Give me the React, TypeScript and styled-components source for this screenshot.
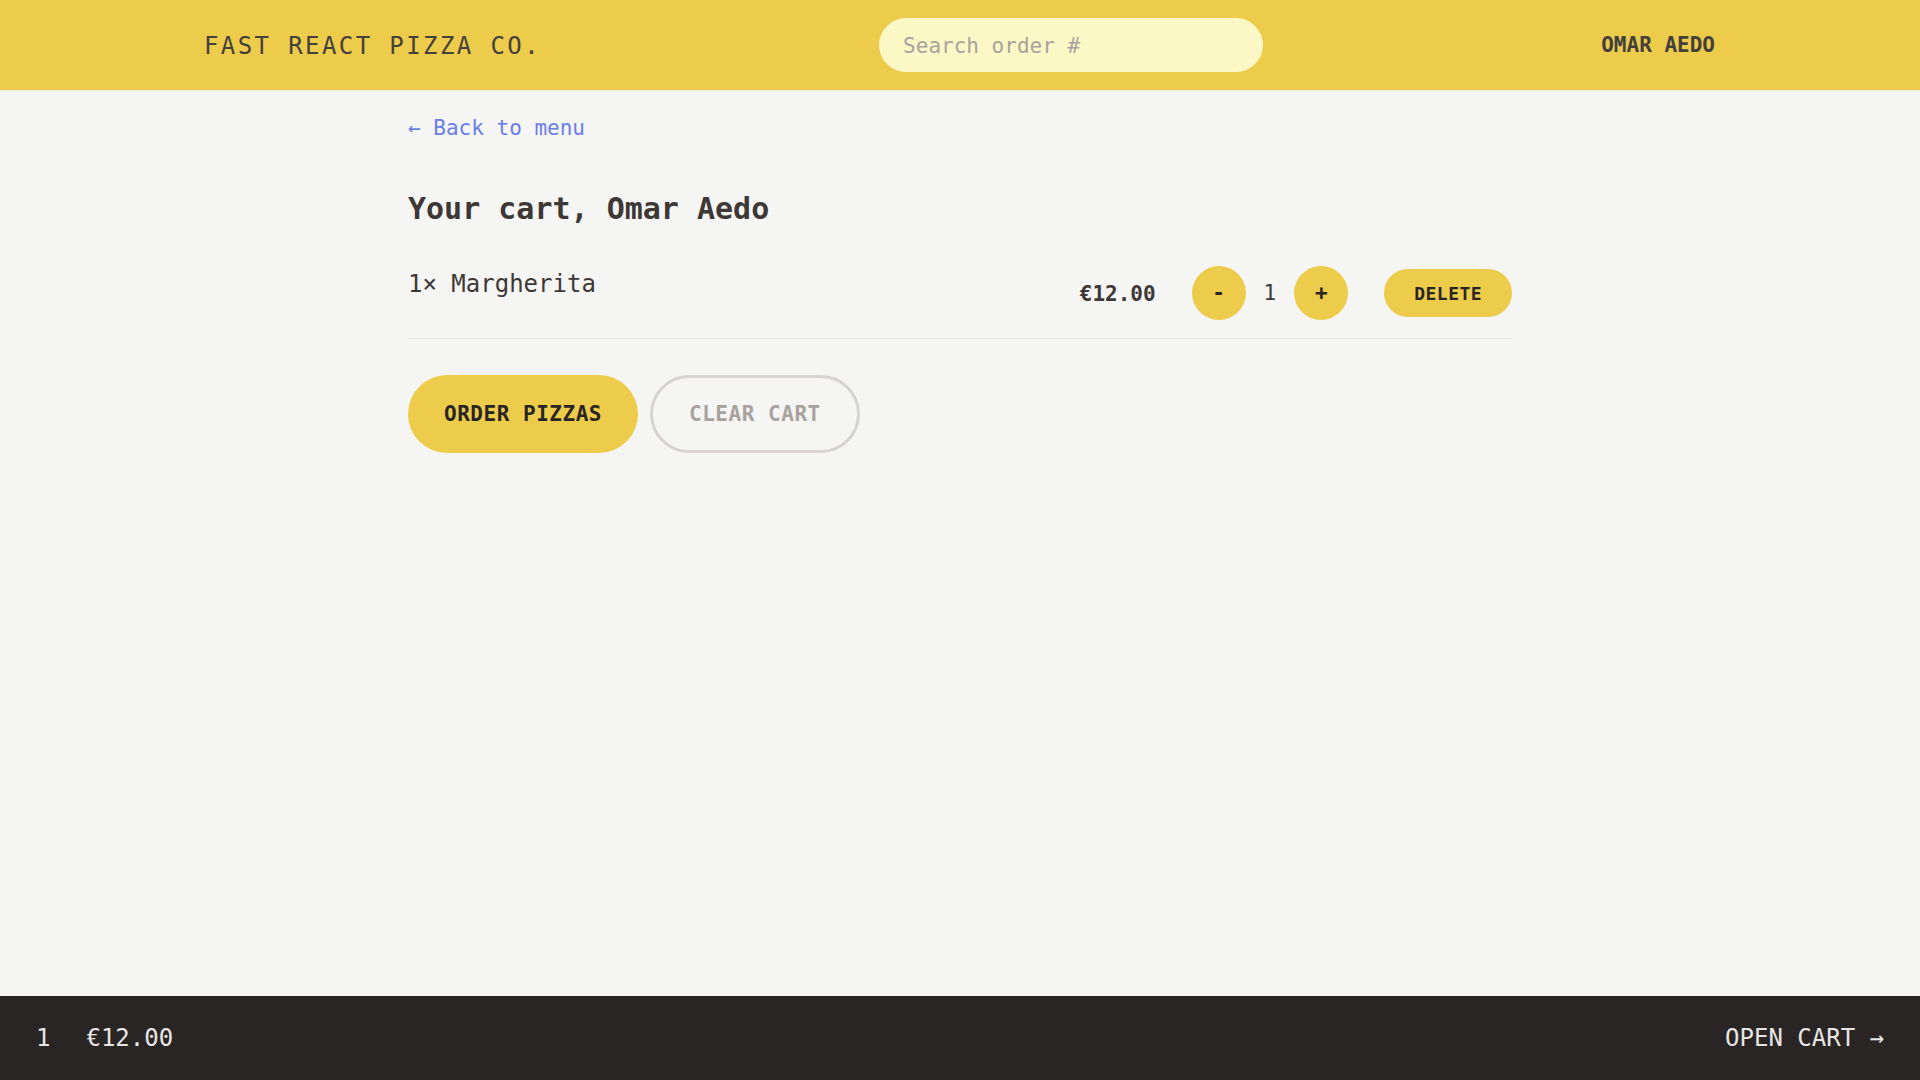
import React from "react";
import styled, { createGlobalStyle } from "styled-components";

const FONT = `"DejaVu Sans Mono", "Liberation Mono", monospace`;

const GlobalStyle = createGlobalStyle`
  *, *::before, *::after { box-sizing: border-box; }
  html, body { margin: 0; padding: 0; }
  body {
    background: #f5f5f4;
    color: #44403c;
    font-family: ${FONT};
    font-size: 24px;
    line-height: 1.5;
  }
`;

const Layout = styled.div`
  display: grid;
  grid-template-rows: auto 1fr auto;
  height: 100vh;
`;

const Header = styled.header`
  display: flex;
  align-items: center;
  justify-content: space-between;
  height: 91px;
  padding: 0 205px 0 204px;
  background: #edcc4b;
  border-bottom: 1px solid #e7e5e4;
  text-transform: uppercase;
`;

const Logo = styled.a`
  padding-top: 2px;
  font-size: 24px;
  letter-spacing: 2.4px;
  color: #44403c;
  text-decoration: none;
`;

const SearchInput = styled.input`
  width: 384px;
  height: 54px;
  border: none;
  outline: none;
  border-radius: 999px;
  background: #fbf8c6;
  padding: 2px 24px 0;
  font-family: ${FONT};
  font-size: 21px;
  color: #44403c;
  &::placeholder {
    color: #a8a29e;
  }
`;

const UserName = styled.div`
  padding-top: 2px;
  font-size: 21px;
  font-weight: 700;
  color: #44403c;
`;

const Main = styled.main`
  overflow: auto;
`;

const Container = styled.div`
  max-width: 1152px;
  margin: 0 auto;
  padding: 18px 24px;
`;

const BackLink = styled.a`
  display: inline-block;
  padding-top: 1px;
  font-size: 21px;
  line-height: 36px;
  color: #6a7de8;
  text-decoration: none;
`;

const Title = styled.h2`
  margin: 42px 0 0;
  font-size: 30px;
  line-height: 42px;
  font-weight: 700;
  color: #3d3835;
`;

const List = styled.ul`
  margin: 18px 0 0;
  padding: 0;
  list-style: none;
  border-bottom: 1.5px solid #e7e5e4;
`;

const Item = styled.li`
  display: flex;
  align-items: flex-start;
  justify-content: space-between;
  padding: 18px 0;
`;

const ItemName = styled.p`
  margin: 0;
  font-size: 24px;
  line-height: 36px;
  color: #3d3835;
`;

const ItemActions = styled.div`
  display: flex;
  align-items: center;
  gap: 36px;
`;

const Price = styled.p`
  margin: 0;
  padding-top: 1px;
  font-size: 21px;
  line-height: 30px;
  font-weight: 700;
  color: #3d3835;
`;

const Quantity = styled.div`
  display: flex;
  align-items: center;
  gap: 18px;
`;

const RoundButton = styled.button`
  width: 54px;
  height: 54px;
  border: none;
  border-radius: 50%;
  background: #edcc4b;
  color: #292524;
  font-family: ${FONT};
  font-size: 21px;
  font-weight: 700;
  line-height: 30px;
  padding: 0;
  cursor: pointer;
`;

const QtyValue = styled.span`
  font-size: 21px;
  line-height: 30px;
  color: #3d3835;
`;

const PillButton = styled.button<{ $size?: "small" | "large"; $variant?: "primary" | "secondary" }>`
  display: inline-flex;
  align-items: center;
  justify-content: center;
  border-radius: 999px;
  font-family: ${FONT};
  font-weight: 700;
  text-transform: uppercase;
  cursor: pointer;
  height: ${(p) => (p.$size === "small" ? "48px" : "78px")};
  padding: ${(p) => (p.$size === "small" ? "0 30px" : "0 36px")};
  font-size: ${(p) => (p.$size === "small" ? "18px" : "21px")};
  letter-spacing: ${(p) => (p.$size === "small" ? "0.45px" : "0.525px")};
  background: ${(p) => (p.$variant === "secondary" ? "transparent" : "#edcc4b")};
  color: ${(p) => (p.$variant === "secondary" ? "#a8a29e" : "#292524")};
  border: ${(p) => (p.$variant === "secondary" ? "3px solid #d6d3d1" : "none")};
`;

const Actions = styled.div`
  display: flex;
  gap: 12px;
  margin-top: 36px;
`;

const Footer = styled.footer`
  display: flex;
  align-items: center;
  justify-content: space-between;
  height: 84px;
  padding: 0 36px;
  background: #292524;
  color: #e7e5e4;
  font-size: 24px;
  text-transform: uppercase;
`;

const Summary = styled.p`
  display: flex;
  gap: 36px;
  margin: 0;
`;

const OpenCart = styled.a`
  color: #e7e5e4;
  text-decoration: none;
`;

export default function App() {
  return (
    <>
      <GlobalStyle />
      <Layout>
        <Header>
          <Logo href="#">Fast React Pizza Co.</Logo>
          <SearchInput placeholder="Search order #" />
          <UserName>Omar Aedo</UserName>
        </Header>
        <Main>
          <Container>
            <BackLink href="#">← Back to menu</BackLink>
            <Title>Your cart, Omar Aedo</Title>
            <List>
              <Item>
                <ItemName>1× Margherita</ItemName>
                <ItemActions>
                  <Price>€12.00</Price>
                  <Quantity>
                    <RoundButton>-</RoundButton>
                    <QtyValue>1</QtyValue>
                    <RoundButton>+</RoundButton>
                  </Quantity>
                  <PillButton $size="small">Delete</PillButton>
                </ItemActions>
              </Item>
            </List>
            <Actions>
              <PillButton>Order pizzas</PillButton>
              <PillButton $variant="secondary">Clear cart</PillButton>
            </Actions>
          </Container>
        </Main>
        <Footer>
          <Summary>
            <span>1</span>
            <span>€12.00</span>
          </Summary>
          <OpenCart href="#">Open cart →</OpenCart>
        </Footer>
      </Layout>
    </>
  );
}
